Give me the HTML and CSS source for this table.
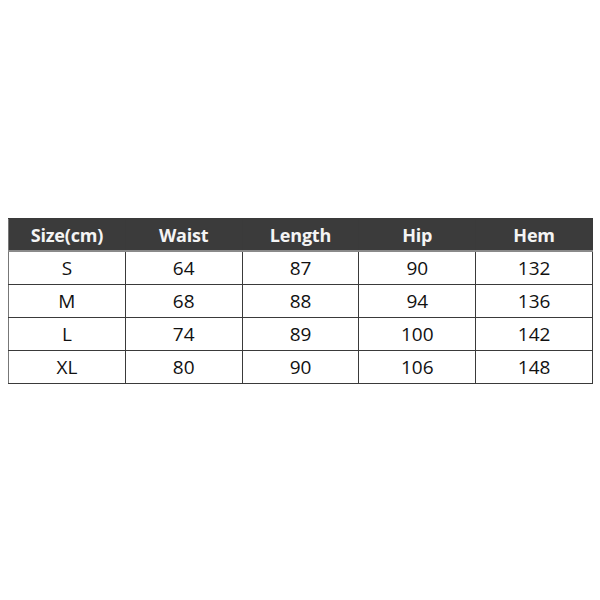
FILE: index.html
```html
<!DOCTYPE html>
<html>
<head>
<meta charset="utf-8">
<link rel="stylesheet" href="styles.css">
</head>
<body>
<div class="wrap">
<table class="size-table">
  <thead>
    <tr><th>Size(cm)</th><th>Waist</th><th>Length</th><th>Hip</th><th>Hem</th></tr>
  </thead>
  <tbody>
    <tr><td>S</td><td>64</td><td>87</td><td>90</td><td>132</td></tr>
    <tr><td>M</td><td>68</td><td>88</td><td>94</td><td>136</td></tr>
    <tr><td>L</td><td>74</td><td>89</td><td>100</td><td>142</td></tr>
    <tr><td>XL</td><td>80</td><td>90</td><td>106</td><td>148</td></tr>
  </tbody>
</table>
</div>
</body>
</html>
```
FILE: styles.css
```css
html, body {
  margin: 0;
  padding: 0;
  background: #ffffff;
}
.wrap {
  padding: 218px 0 0 8px;
}
.size-table {
  border-collapse: collapse;
  table-layout: fixed;
  width: 585px;
  font-family: "Open Sans", "Liberation Sans", sans-serif;
  color: #111;
}
.size-table th,
.size-table td {
  text-align: center;
  padding: 0;
  border: 1px solid #3a3a3a;
}
.size-table th {
  height: 31px;
  background: #3b3b3b;
  color: #f4f4f4;
  font-weight: 700;
  font-size: 18px;
  letter-spacing: -0.2px;
  border-bottom: 2px solid #8a8a8a;
}
.size-table td {
  height: 32px;
  font-size: 19px;
  font-weight: 400;
}
.size-table tr td:first-child,
.size-table tr th:first-child {
  border-left-color: #777;
}
```
